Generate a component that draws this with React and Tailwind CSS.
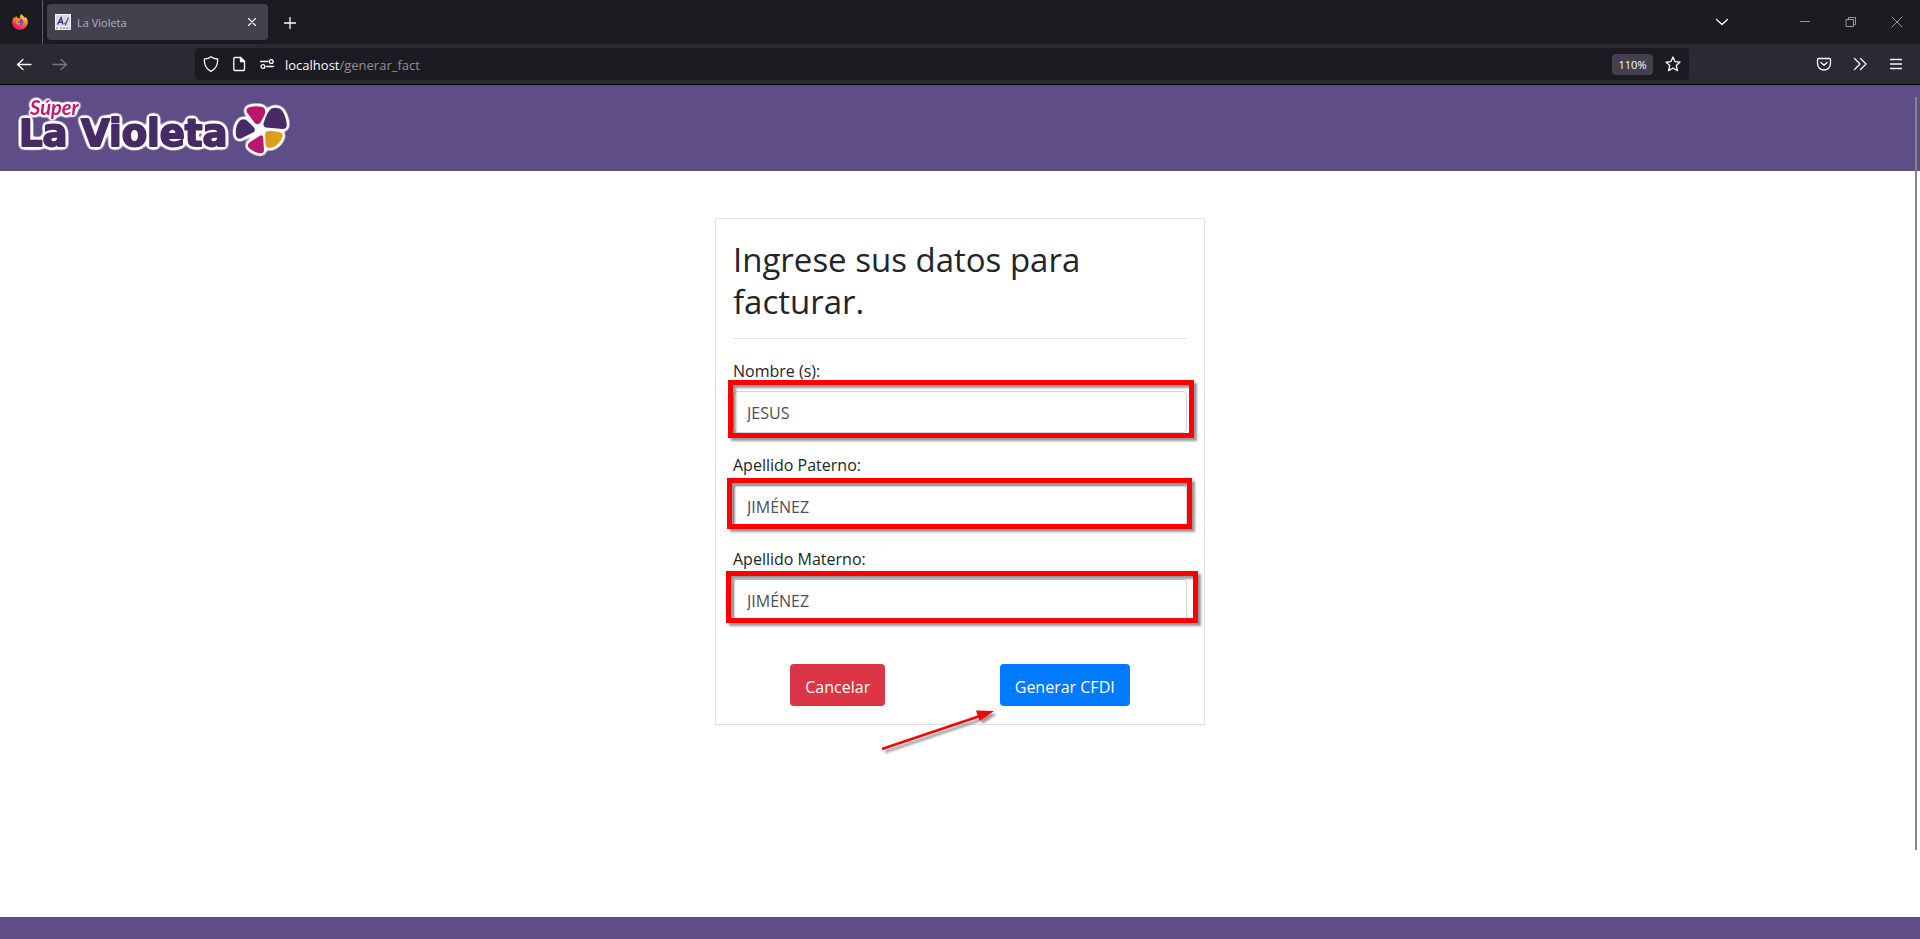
import React from "react";

function FirefoxIcon() {
  return (
    <svg viewBox="0 0 16 16" className="size-4" aria-hidden="true">
      <defs>
        <linearGradient id="fx" x1="0.8" y1="0" x2="0.3" y2="1">
          <stop offset="0" stopColor="#fff44f" />
          <stop offset="0.4" stopColor="#ff980e" />
          <stop offset="0.75" stopColor="#ff3647" />
          <stop offset="1" stopColor="#e31587" />
        </linearGradient>
      </defs>
      <path
        d="M9.6 0C10 1.600 11.500 2.200 12.300 3.200C12.700 3.700 13 4 13.200 3.900C13.400 3.600 13.300 3 13.200 2.600C15 4.200 16 6.400 15.700 8.800C15.200 13 12 15.800 8 15.800C3.600 15.800 0.200 12.600 0.200 8.200C0.200 5.800 1.200 3.800 2.200 2.800C2.200 3.500 2.400 4 2.700 4.300C3.200 3.200 3.600 2.500 4.600 1.900C4.500 2.800 4.900 3.700 5.800 3.900L8 4.200C8 2.600 8.400 1 9.600 0Z"
        fill="url(#fx)"
      />
      <circle cx="8" cy="8" r="3.300" fill="#7a3ff2" />
      <path d="M3.600 5.400C5 4.400 6.600 4.800 7.600 5.600C8.300 5.700 8.800 5.900 8.600 6.300C8 7 6.600 6.900 6.400 7.800C6.200 9 7.600 9.800 9.200 9.300C8 11.800 3.600 10.800 3.600 7.500Z" fill="#ff8a16" />
    </svg>
  );
}

function Favicon() {
  return (
    <svg viewBox="0 0 16 16" className="size-4" aria-hidden="true">
      <rect width="16" height="16" fill="#f4f2f8" />
      <rect x="1" y="1" width="14" height="11" fill="#dcd7e6" />
      <path d="M2.500 10.500L6 3.800L8 10.500M4 8.300H7.500" stroke="#4d3a86" strokeWidth="1.500" fill="none" />
      <path d="M9.500 8.500L10.500 10.500L13.500 3.500" stroke="#6a5a99" strokeWidth="1.400" fill="none" />
      <path d="M1 14H4M5 14H15" stroke="#6a5a99" strokeWidth="1.200" strokeDasharray="2 1" />
    </svg>
  );
}

function Glyph({ children, className = "size-4", width = 1.3 }) {
  return (
    <svg
      viewBox="0 0 16 16"
      className={className}
      fill="none"
      stroke="currentColor"
      strokeWidth={width}
      strokeLinecap="round"
      strokeLinejoin="round"
      aria-hidden="true"
    >
      {children}
    </svg>
  );
}

function IconButton({ label, className = "", children }) {
  return (
    <button type="button" aria-label={label} className={"flex h-8 shrink-0 items-center justify-center " + className}>
      {children}
    </button>
  );
}

function TabBar() {
  return (
    <div className="flex h-11 items-center bg-[#1c1b22] text-[#fbfbfe]">
      <button type="button" aria-label="Firefox View" className="flex h-11 w-[43px] shrink-0 items-center border-r border-[#5b5b66] pl-3">
        <FirefoxIcon />
      </button>
      <div className="ml-1 flex h-9 w-[221px] shrink-0 items-center rounded bg-[#42414d] px-2 shadow-sm">
        <Favicon />
        <span className="ml-1.5 flex-1 pt-0.5 text-[11px] text-[#b4b3bb]">La Violeta</span>
        <button type="button" aria-label="Cerrar pestaña" className="flex size-4 items-center justify-center">
          <Glyph width={1.1}><path d="M4.500 4.500L11.500 11.500M11.500 4.500L4.500 11.500" /></Glyph>
        </button>
      </div>
      <IconButton label="Nueva pestaña" className="ml-1.5 w-8 pt-0.5">
        <Glyph><path d="M8 2.500V13.500M2.500 8H13.500" /></Glyph>
      </IconButton>
      <div className="flex-1" />
      <IconButton label="Listar pestañas" className="mr-11 w-8">
        <Glyph><path d="M2.500 5.500L8 10.500L13.500 5.500" /></Glyph>
      </IconButton>
      <div className="flex text-[#97969c]">
        <IconButton label="Minimizar" className="w-[46px]">
          <Glyph width={1}><path d="M3 7.500H13" strokeLinecap="butt" /></Glyph>
        </IconButton>
        <IconButton label="Restaurar" className="w-[46px]">
          <Glyph width={1}><path d="M3.500 5.500H10.500V12.500H3.500ZM5.500 5.500V3.500H12.500V10.500H10.500" /></Glyph>
        </IconButton>
        <IconButton label="Cerrar" className="w-[46px]">
          <Glyph width={1}><path d="M3 3L13 13M13 3L3 13" /></Glyph>
        </IconButton>
      </div>
    </div>
  );
}

function NavBar() {
  return (
    <div className="flex h-[41px] items-center border-b border-black bg-[#2b2a33] text-[#fbfbfe]">
      <IconButton label="Atrás" className="ml-1.5 w-9">
        <Glyph><path d="M15 8.500H1.500M7 3.500L1.500 8.500L7 13.500" /></Glyph>
      </IconButton>
      <IconButton label="Adelante" className="w-9 text-[#77767e]">
        <Glyph><path d="M1 8.500H14.500M9 3.500L14.500 8.500L9 13.500" /></Glyph>
      </IconButton>
      <div className="ml-[117px] flex h-8 flex-1 items-center rounded bg-[#1c1b22] pl-2">
        <Glyph><path d="M8 0.800C9.800 2.400 12 3 14.600 3C14.900 7.500 13.500 12.600 8 15.300C2.500 12.600 1.100 7.500 1.400 3C4 3 6.200 2.400 8 0.800Z" /></Glyph>
        <Glyph className="ml-3 size-4">
          <path d="M3.800 1.500H9.500L13.500 5.500V13.500Q13.500 14.500 12.500 14.500H3.800Q2.800 14.500 2.800 13.500V2.500Q2.800 1.500 3.800 1.500Z" />
          <path d="M9.500 1.500V5.500H13.500Z" fill="currentColor" />
        </Glyph>
        <Glyph className="ml-3 size-4">
          <path d="M1.500 5.500H9M7.500 10.500H14.500" />
          <circle cx="12.300" cy="5.500" r="1.900" />
          <circle cx="4" cy="10.500" r="1.900" />
        </Glyph>
        <div className="ml-2.5 flex-1 pt-1 text-[13px] text-[#8f8f95]">
          <span className="text-[#fbfbfe]">localhost</span>/generar_fact
        </div>
        <button type="button" className="h-[21px] w-[41px] rounded-sm bg-[#42414d] text-center text-[11px] leading-[21px]">110%</button>
        <IconButton label="Añadir a marcadores" className="ml-1 w-8">
          <Glyph><path d="M8 1L10 5.600L15 6.100L11.300 9.500L12.400 14.600L8 12L3.600 14.600L4.700 9.500L1 6.100L6 5.600Z" /></Glyph>
        </IconButton>
      </div>
      <IconButton label="Guardar en Pocket" className="ml-[117px] w-9">
        <Glyph>
          <path d="M2.500 2.500H13.500Q14.500 2.500 14.500 3.500V7.500C14.500 11.500 11.500 14 8 14S1.500 11.500 1.500 7.500V3.500Q1.500 2.500 2.500 2.500Z" />
          <path d="M5 6.500L8 9.300L11 6.500" />
        </Glyph>
      </IconButton>
      <IconButton label="Más herramientas" className="w-9">
        <Glyph><path d="M2.500 2.500L8 8L2.500 13.500M8.500 2.500L14 8L8.500 13.500" /></Glyph>
      </IconButton>
      <IconButton label="Menú" className="mr-1.5 w-9">
        <Glyph><path d="M2.500 3.500H13.500M2.500 8H13.500M2.500 12.500H13.500" /></Glyph>
      </IconButton>
    </div>
  );
}

function Logo() {
  return (
    <svg viewBox="16 93 280 70" className="h-[70px] w-[280px]" role="img" aria-label="Súper La Violeta">
      <defs>
        <filter id="halo" x="-5%" y="-10%" width="110%" height="120%" colorInterpolationFilters="sRGB">
          <feGaussianBlur in="SourceAlpha" stdDeviation="2" result="b" />
          <feComponentTransfer in="b" result="m">
            <feFuncR type="linear" slope="0" intercept="1" />
            <feFuncG type="linear" slope="0" intercept="1" />
            <feFuncB type="linear" slope="0" intercept="1" />
            <feFuncA type="linear" slope="9" intercept="-0.3" />
          </feComponentTransfer>
          <feMerge>
            <feMergeNode in="m" />
            <feMergeNode in="SourceGraphic" />
          </feMerge>
        </filter>
      </defs>
      <g filter="url(#halo)">
        <g fill="#472a66" stroke="#472a66" strokeWidth="1.800" strokeLinejoin="round" className="font-['DejaVu_Sans',sans-serif] text-[37px] font-bold">
          <text x="19" y="146">La</text>
          <text x="81" y="146">Violeta</text>
        </g>
        <circle cx="259" cy="129" r="8" fill="#fff" />
        <path d="M250 107C254 106 259 106 262.500 107C265.500 108 265.500 112 264.500 115L260.500 122.500C258.500 125 255.500 124.500 254 122L247 112.500C245.500 110 247 107.500 250 107Z" fill="#b9166c" />
        <path d="M271.500 108.500C275 107 279.500 107.500 282 110.500C285 114.500 286.500 120 286.800 125C286.800 128 285 129 282.500 129L266 127.500C263.500 127 262.800 124.500 264 122C265.500 117 268 111 271.500 108.500Z" fill="#472a66" />
        <path d="M241 119.800C243.500 118.500 246 119.500 248 121.500L254 127.500C255.500 129.500 255 131.500 253 132.500L241 138.500C238.500 139.500 236.500 138 236 135.500C235 130 236.500 123 241 119.800Z" fill="#472a66" />
        <path d="M267.500 131.200C272 130.500 278 131.500 281.500 133C283.500 134.500 282.500 137.500 281 140C278.500 144.500 274 147.800 269.500 148C267 148 265.800 146.500 265.600 144L265 134C265 132.500 266 131.500 267.500 131.200Z" fill="#d9a018" />
        <path d="M260.500 135.500C262 134.800 263 136 263.200 138L264 150C264 152.500 262.500 153.500 260 153.200C255.500 152.700 251.500 150.500 248.500 147.500C247 145.500 248 143.500 250 142Z" fill="#b9166c" />
      </g>
      <text x="30" y="115" fill="#c2186f" filter="url(#halo)" className="font-['Lato',sans-serif] text-[20px] font-bold italic">
        Súper
      </text>
    </svg>
  );
}

function Field({ id, label, value, frame }) {
  return (
    <div className="mb-[18px]">
      <label htmlFor={id} className="mb-[7px] block pt-px text-base leading-[26px]">{label}</label>
      <div className="relative">
        <input
          id={id}
          type="text"
          defaultValue={value}
          className="block h-[42px] w-full rounded border border-[#ced4da] bg-white px-[13px] pt-0.5 text-base text-[#495057] outline-none"
        />
        <div className={"pointer-events-none absolute border-5 border-[#ff0000] drop-shadow-[3px_3px_1px_rgba(0,0,0,0.4)] " + frame} />
      </div>
    </div>
  );
}

function Arrow() {
  return (
    <svg viewBox="0 0 124 50" className="pointer-events-none absolute top-[486px] left-[160px] h-[50px] w-[124px] drop-shadow-[3px_3px_1px_rgba(0,0,0,0.4)]" aria-hidden="true">
      <path d="M6 44L104 11" stroke="#ff0000" strokeWidth="2.500" />
      <path d="M118 6L100 5.500L103.500 16Z" fill="#ff0000" />
    </svg>
  );
}

export default function App() {
  return (
    <div className="flex min-h-screen flex-col bg-white font-['Open_Sans','Noto_Sans',sans-serif] text-[#212529]">
      <TabBar />
      <NavBar />
      <div className="relative flex flex-1 flex-col">
        <header className="flex h-[86px] items-center bg-[#5f4d87] px-4">
          <a href="/"><Logo /></a>
        </header>
        <main className="flex flex-1 justify-center px-4 py-[47px]">
          <form className="relative w-full max-w-[490px] self-start border border-[#dee2e6] p-[17px] pb-[18px]" onSubmit={(e) => e.preventDefault()}>
            <h2 className="mb-[15px] pt-[3px] text-[33px] leading-[42px]">Ingrese sus datos para facturar.</h2>
            <hr className="mb-[18px] border-[#e5e5e5]" />
            <Field id="nombre" label="Nombre (s):" value="JESUS" frame="-top-[11px] -right-[7px] -bottom-[5px] -left-[5px]" />
            <Field id="paterno" label="Apellido Paterno:" value="JIMÉNEZ" frame="-top-[7px] -right-[5px] -bottom-[2px] -left-[6px]" />
            <Field id="materno" label="Apellido Materno:" value="JIMÉNEZ" frame="-top-[8px] -right-[11px] -bottom-[2px] -left-[7px]" />
            <div className="mt-[43px] flex justify-around">
              <button type="button" className="h-[42px] rounded bg-[#dc3545] px-[15px] pt-1 text-base text-white">Cancelar</button>
              <button type="submit" className="h-[42px] rounded bg-[#007bff] px-[15px] pt-1 text-base text-white">Generar CFDI</button>
            </div>
            <Arrow />
          </form>
        </main>
        <footer className="h-[22px] bg-[#5f4d87]" />
        <div className="absolute top-3 right-[3px] bottom-[89px] w-0.5 bg-[#858585]" />
      </div>
    </div>
  );
}
